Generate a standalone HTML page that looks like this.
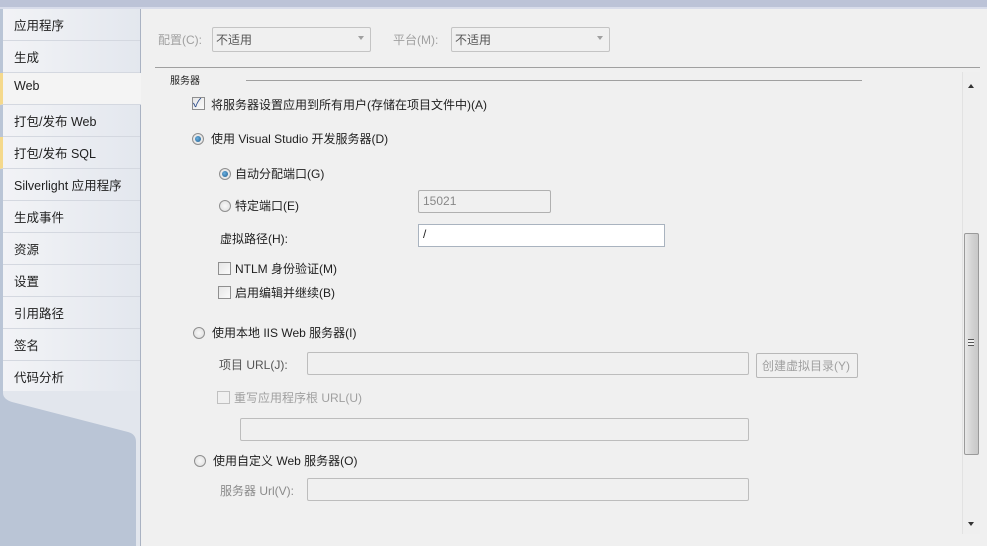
<!DOCTYPE html>
<html><head><meta charset="utf-8"><style>
*{margin:0;padding:0;box-sizing:border-box}
body{width:987px;height:546px;overflow:hidden;background:#f0f0f0;font-family:"Liberation Sans","Noto Sans CJK SC",sans-serif;font-size:12px;color:#1e1e1e;position:relative}
.a{position:absolute;white-space:nowrap}
.tab{position:absolute;left:3px;width:137px;height:32px;border-bottom:1px solid #d4d8e0;background:linear-gradient(90deg,#f2f3f6,#e3e7ee);padding:6px 0 0 11px;font-size:12.5px}
.box{position:absolute;background:#f0f0f0;border:1px solid #bdbdbd;border-radius:2px}
.wbox{position:absolute;background:#fff;border:1px solid #a9b3bf}
.rad{position:absolute;width:12px;height:12px;border-radius:50%;border:1px solid #8f8f8f;background:radial-gradient(circle,#f8f8f8,#dcdcdc)}
.rad.on::after{content:"";position:absolute;left:2px;top:2px;width:6px;height:6px;border-radius:50%;background:radial-gradient(circle at 40% 40%,#6ab0e0,#1d5a8c)}
.chk{position:absolute;width:13px;height:13px;border:1px solid #8f8f8f;background:linear-gradient(135deg,#e6e6e6,#fafafa)}
.dis{color:#a0a0a0}
</style></head><body>
<div class="a" style="left:0;top:0;width:987px;height:9px;background:#bcc3d7;border-bottom:2px solid #d8dcea"></div>
<div class="a" style="left:0;top:9px;width:141px;height:537px;background:#bac5d6;border-right:1px solid #a9b2c2"></div>
<svg class="a" style="left:0;top:390px" width="141" height="156"><path d="M3 0 H140 V156 H136 V52 Q136 44 128 42 L12 12 Q3 9 3 3Z" fill="#e2e6ed"/></svg>
<div class="tab" style="top:9px">应用程序</div>
<div class="tab" style="top:41px">生成</div>
<div class="tab" style="top:73px;left:0;padding-left:11px;width:141px;background:#f4f4f4;border-left:3px solid #f5d98c">Web</div>
<div class="tab" style="top:105px">打包/发布 Web</div>
<div class="tab" style="top:137px;left:0;padding-left:11px;width:140px;border-left:3px solid #f5d98c">打包/发布 SQL</div>
<div class="tab" style="top:169px">Silverlight 应用程序</div>
<div class="tab" style="top:201px">生成事件</div>
<div class="tab" style="top:233px">资源</div>
<div class="tab" style="top:265px">设置</div>
<div class="tab" style="top:297px">引用路径</div>
<div class="tab" style="top:329px">签名</div>
<div class="tab" style="top:361px;border-bottom:none;height:30px">代码分析</div>

<div class="a dis" style="left:158px;top:31px">配置(C):</div>
<div class="box" style="left:212px;top:27px;width:159px;height:25px;border-color:#c4c4c4"></div>
<div class="a" style="left:216px;top:31px;color:#555">不适用</div>
<div class="a" style="left:358px;top:36px;width:0;height:0;border:3px solid transparent;border-top:4px solid #a0a0a0"></div>
<div class="a dis" style="left:393px;top:31px">平台(M):</div>
<div class="box" style="left:451px;top:27px;width:159px;height:25px;border-color:#c4c4c4"></div>
<div class="a" style="left:455px;top:31px;color:#555">不适用</div>
<div class="a" style="left:597px;top:36px;width:0;height:0;border:3px solid transparent;border-top:4px solid #a0a0a0"></div>
<div class="a" style="left:155px;top:67px;width:825px;height:1px;background:#a0a0a0"></div>
<div class="a" style="left:170px;top:72px;font-size:10px">服务器</div>
<div class="a" style="left:246px;top:80px;width:616px;height:1px;background:#a0a0a0"></div>

<div class="chk" style="left:192px;top:97px"></div>
<div class="a" style="left:193px;top:94px;font-size:12px;color:#2a4a8a">✓</div>
<div class="a" style="left:211px;top:96px">将服务器设置应用到所有用户(存储在项目文件中)(A)</div>
<div class="rad on" style="left:192px;top:133px"></div>
<div class="a" style="left:211px;top:130px">使用 Visual Studio 开发服务器(D)</div>
<div class="rad on" style="left:219px;top:168px"></div>
<div class="a" style="left:235px;top:165px">自动分配端口(G)</div>
<div class="rad" style="left:219px;top:200px"></div>
<div class="a" style="left:235px;top:197px">特定端口(E)</div>
<div class="box" style="left:418px;top:190px;width:133px;height:23px;border-color:#b0b0b0"></div>
<div class="a dis" style="left:423px;top:194px;color:#888">15021</div>
<div class="a" style="left:220px;top:230px">虚拟路径(H):</div>
<div class="wbox" style="left:418px;top:224px;width:247px;height:23px"></div>
<div class="a" style="left:423px;top:227px">/</div>
<div class="chk" style="left:218px;top:262px"></div>
<div class="a" style="left:235px;top:260px">NTLM 身份验证(M)</div>
<div class="chk" style="left:218px;top:286px"></div>
<div class="a" style="left:235px;top:284px">启用编辑并继续(B)</div>

<div class="rad" style="left:193px;top:327px"></div>
<div class="a" style="left:212px;top:324px">使用本地 IIS Web 服务器(I)</div>
<div class="a" style="left:219px;top:356px;color:#555">项目 URL(J):</div>
<div class="box" style="left:307px;top:352px;width:442px;height:23px"></div>
<div class="box" style="left:756px;top:353px;width:102px;height:25px;border-color:#b8b8b8"></div>
<div class="a dis" style="left:762px;top:357px">创建虚拟目录(Y)</div>
<div class="chk" style="left:217px;top:391px;border-color:#c0c0c0;background:#f0f0f0"></div>
<div class="a dis" style="left:234px;top:389px">重写应用程序根 URL(U)</div>
<div class="box" style="left:240px;top:418px;width:509px;height:23px"></div>
<div class="rad" style="left:194px;top:455px"></div>
<div class="a" style="left:213px;top:452px">使用自定义 Web 服务器(O)</div>
<div class="a dis" style="left:220px;top:482px;color:#8a8a8a">服务器 Url(V):</div>
<div class="box" style="left:307px;top:478px;width:442px;height:23px"></div>

<div class="a" style="left:962px;top:72px;width:18px;height:462px;background:#efefef;border-left:1px solid #e2e2e2"></div>
<div class="a" style="left:968px;top:81px;width:0;height:0;border:3px solid transparent;border-bottom:4px solid #333"></div>
<div class="a" style="left:968px;top:522px;width:0;height:0;border:3px solid transparent;border-top:4px solid #333"></div>
<div class="a" style="left:964px;top:233px;width:15px;height:222px;border:1px solid #9a9a9a;border-radius:2px;background:linear-gradient(90deg,#e8e8e8,#d4d4d4 50%,#c8c8c8)"></div>
<div class="a" style="left:968px;top:339px;width:6px;height:7px;border-top:1px solid #555;border-bottom:1px solid #555;background:linear-gradient(#f0f0f0 2px,#555 2px,#555 3px,#f0f0f0 3px)"></div>
</body></html>
